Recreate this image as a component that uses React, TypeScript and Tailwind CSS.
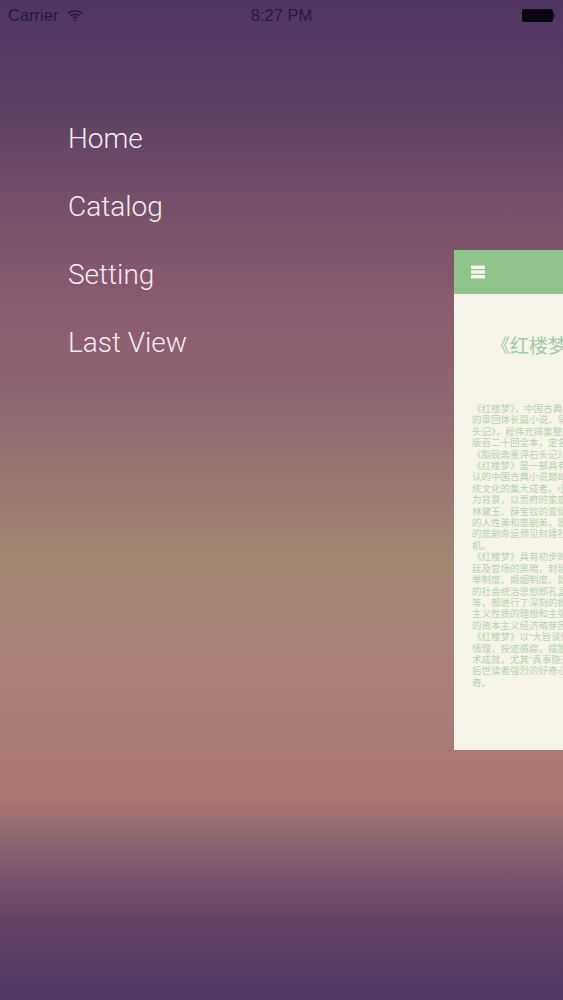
const menuItems = ["Home", "Catalog", "Setting", "Last View"];

const bookLines = [
  "《红楼梦》，中国古典四大名著之首，",
  "的章回体长篇小说。早期仅有前八十回",
  "头记》，程伟元排集整理后印行，",
  "版百二十回全本，定名《红楼梦》。",
  "《脂砚斋重评石头记》",
  "《红楼梦》是一部具有世界影响力",
  "认的中国古典小说巅峰之作，",
  "统文化的集大成者。小说以贾府",
  "为背景，以贾府的家庭琐事为主线，",
  "林黛玉、薛宝钗的爱情婚姻悲剧，",
  "的人性美和悲剧美，歌颂了女性，",
  "的悲剧命运预见封建社会的",
  "机。",
  "《红楼梦》具有初步的民主主义",
  "廷及官场的黑暗，封建贵族阶级",
  "举制度、婚姻制度、奴婢制度、",
  "的社会统治思想即孔孟之道和",
  "等，都进行了深刻的批判，并且",
  "主义性质的理想和主张，这些",
  "的资本主义经济萌芽因素的",
  "《红楼梦》以\"大旨谈情，实录",
  "情理，按迹循踪，摆脱旧套，",
  "术成就，尤其\"真事隐去，假语",
  "后世读者强烈的好奇心和",
  "奇。",
];

function MenuIcon() {
  return (
    <svg width="14" height="14" viewBox="0 0 14 14" fill="#f6f3e8">
      <rect x="0" y="0.5" width="14" height="3.4" rx="0.6" />
      <rect x="0" y="5.3" width="14" height="3.4" rx="0.6" />
      <rect x="0" y="10.1" width="14" height="3.4" rx="0.6" />
    </svg>
  );
}

function Wifi() {
  return (
    <svg width="16" height="13" viewBox="0 0 17 13" fill="none" stroke="#2a1a3c" strokeWidth="1.6">
      <path d="M1 4.2C5.4 0.4 11.6 0.4 16 4.2" />
      <path d="M3.6 6.9C6.4 4.5 10.6 4.5 13.4 6.9" />
      <path d="M6 9.4C7.5 8.2 9.5 8.2 11 9.4" />
      <path d="M8.5 12.6L7 10.9C8 10.3 9 10.3 10 10.9Z" fill="#2a1a3c" stroke="none" />
    </svg>
  );
}

export default function App() {
  return (
    <div className="h-[1000px] w-[563px] overflow-hidden bg-[linear-gradient(180deg,#4f3663_0%,#5a3f62_10%,#745069_20%,#8a5a6e_30%,#8f6372_38%,#9a7a72_50%,#a08672_56%,#ab8079_64%,#a87673_80%,#946a70_83%,#7c586e_87%,#644466_92%,#553b60_97%,#4e3763_100%)] font-['Liberation_Sans','Noto_Sans_CJK_SC',sans-serif]">
      {/* status bar */}
      <div className="flex h-[30px] items-center justify-between pl-[8px] pr-[8px] text-[16.5px] text-[#2a1a3c]">
        <div className="flex w-[140px] items-center gap-[9px]">
          <span>Carrier</span>
          <Wifi />
        </div>
        <span>8:27 PM</span>
        <div className="flex w-[140px] items-center justify-end">
          <div className="h-[13px] w-[31px] rounded-[2px] bg-[#0c0612]" />
          <div className="h-[5px] w-[2px] rounded-r-[1px] bg-[#2a1a3c]" />
        </div>
      </div>

      <div className="flex">
        {/* side menu */}
        <nav className="flex w-[454px] shrink-0 flex-col gap-[34px] pl-[68px] pt-[92px] font-['Roboto',sans-serif]">
          {menuItems.map((item) => (
            <a key={item} className="h-[34px] text-[28px] font-light leading-[34px] text-[#f7ebf3]">
              {item}
            </a>
          ))}
        </nav>

        {/* shrunken page preview */}
        <div className="mt-[220px] h-[500px] w-[281px] shrink-0 bg-[#f6f3e9]">
          <div className="flex h-[44px] items-center bg-[#8fc48b] pl-[17px]">
            <MenuIcon />
          </div>
          <div className="pl-[18px] pt-[41px]">
            <h1 className="whitespace-nowrap pl-[19px] text-[19px] font-normal leading-[24px] text-[#a6c9a6]">
              《红楼梦》
            </h1>
            <div className="mt-[44px] whitespace-nowrap text-[9.5px] leading-[11.4px] text-[#b8d4b4]">
              {bookLines.map((line, i) => (
                <p key={i}>{line}</p>
              ))}
            </div>
          </div>
        </div>
      </div>
    </div>
  );
}
